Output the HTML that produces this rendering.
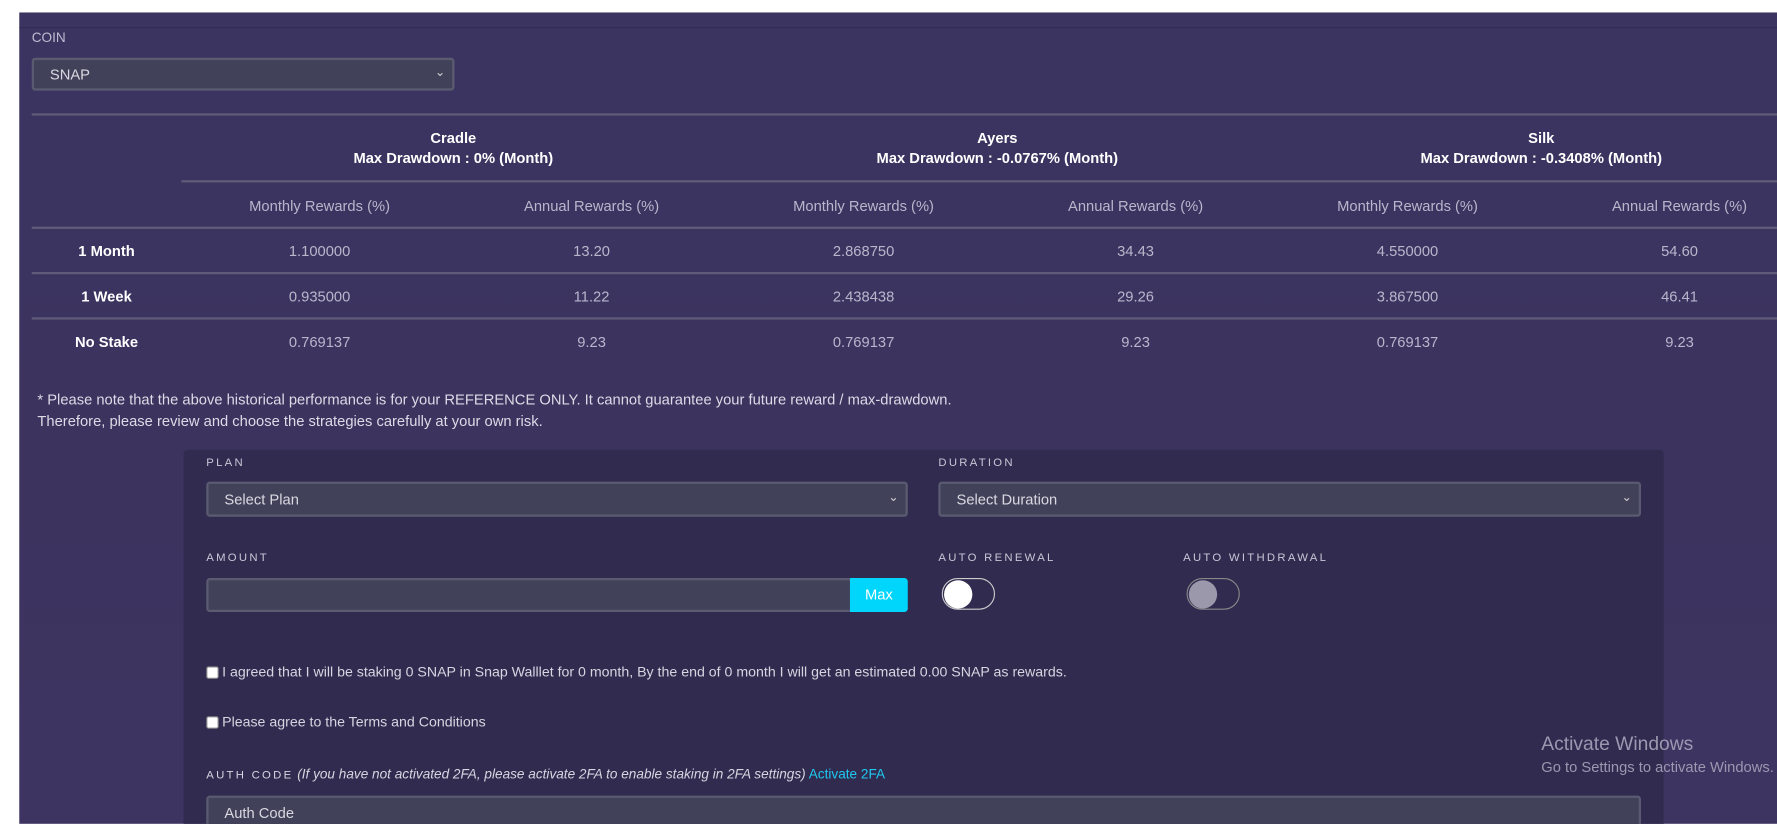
<!DOCTYPE html>
<html><head><meta charset="utf-8"><style>
*{margin:0;padding:0;box-sizing:border-box}
html,body{width:1777px;height:824px;overflow:hidden}
body{background:#fff;font-family:"Liberation Sans",sans-serif;position:relative}
#clip{position:absolute;left:0;top:0;width:1777px;height:824px;overflow:hidden}
#w{position:absolute;left:0;top:0;width:1568px;height:727px;transform:scale(1.13329);transform-origin:0 0;overflow:hidden}
.bg{position:absolute;left:17px;top:11px;right:0;bottom:0;background:linear-gradient(#3c3460,#3c335f 60%,#3e3462)}
.a{position:absolute;white-space:nowrap}
.line{position:absolute;height:2px;background:#5f5b78}
.c{position:absolute;text-align:center;width:240px;font-size:13px;color:#b9b6cc}
.h{position:absolute;text-align:center;font-size:13px;font-weight:bold;color:#fff}
.sel{position:absolute;background:#41425a;border:2px solid #5a5b70;border-radius:3px;color:#d8d8e0;font-size:13px;padding-left:14px}
.sel .chev{position:absolute;right:6px;top:50%;transform:translateY(-55%);font-size:11px;color:#ccc}
.lbl{position:absolute;font-size:10px;letter-spacing:2px;color:#c8c6d6}
.tog{position:absolute;width:47px;height:28px;border:1px solid #ccc;border-radius:14px}
.tog i{position:absolute;left:1px;top:1px;width:25px;height:25px;border-radius:50%}
.cb{position:absolute;width:11px;height:11px;background:#fff;border:1px solid #888;border-radius:2px}
.t{font-size:12.5px;color:#d6d5e0}
</style></head><body><div id="clip"><div id="w">
<div class="bg"></div>
<div class="line" style="left:17px;top:24px;right:0;height:1px;background:#332c55"></div>
<div class="a" style="left:28px;top:26px;font-size:12px;color:#bdbbd0">COIN</div>
<div class="sel" style="left:28px;top:51px;width:373px;height:29px;line-height:25px">SNAP<span class="chev">&#8964;</span></div>

<div class="line" style="left:28px;top:100px;right:0"></div>
<div class="h" style="left:160px;width:480px;top:114px">Cradle<br><span style="line-height:22px">Max Drawdown : 0% (Month)</span></div>
<div class="h" style="left:640px;width:480px;top:114px">Ayers<br><span style="line-height:22px">Max Drawdown : -0.0767% (Month)</span></div>
<div class="h" style="left:1120px;width:480px;top:114px">Silk<br><span style="line-height:22px">Max Drawdown : -0.3408% (Month)</span></div>
<div class="line" style="left:160px;top:159px;right:0"></div>
<div class="c" style="left:162px;top:174px">Monthly Rewards (%)</div>
<div class="c" style="left:402px;top:174px">Annual Rewards (%)</div>
<div class="c" style="left:642px;top:174px">Monthly Rewards (%)</div>
<div class="c" style="left:882px;top:174px">Annual Rewards (%)</div>
<div class="c" style="left:1122px;top:174px">Monthly Rewards (%)</div>
<div class="c" style="left:1362px;top:174px">Annual Rewards (%)</div>
<div class="line" style="left:28px;top:200px;right:0"></div>
<div class="h" style="left:28px;width:132px;top:214px">1 Month</div>
<div class="c" style="left:162px;top:214px">1.100000</div><div class="c" style="left:402px;top:214px">13.20</div><div class="c" style="left:642px;top:214px">2.868750</div><div class="c" style="left:882px;top:214px">34.43</div><div class="c" style="left:1122px;top:214px">4.550000</div><div class="c" style="left:1362px;top:214px">54.60</div>
<div class="line" style="left:28px;top:240px;right:0"></div>
<div class="h" style="left:28px;width:132px;top:254px">1 Week</div>
<div class="c" style="left:162px;top:254px">0.935000</div><div class="c" style="left:402px;top:254px">11.22</div><div class="c" style="left:642px;top:254px">2.438438</div><div class="c" style="left:882px;top:254px">29.26</div><div class="c" style="left:1122px;top:254px">3.867500</div><div class="c" style="left:1362px;top:254px">46.41</div>
<div class="line" style="left:28px;top:280px;right:0"></div>
<div class="h" style="left:28px;width:132px;top:294px">No Stake</div>
<div class="c" style="left:162px;top:294px">0.769137</div><div class="c" style="left:402px;top:294px">9.23</div><div class="c" style="left:642px;top:294px">0.769137</div><div class="c" style="left:882px;top:294px">9.23</div><div class="c" style="left:1122px;top:294px">0.769137</div><div class="c" style="left:1362px;top:294px">9.23</div>

<div class="a" style="left:33px;top:343px;font-size:13px;color:#dcdbe6;line-height:19px">* Please note that the above historical performance is for your REFERENCE ONLY. It cannot guarantee your future reward / max-drawdown.<br>Therefore, please review and choose the strategies carefully at your own risk.</div>

<div class="a" style="left:162px;top:397px;width:1306px;height:340px;background:#322b50;border-radius:3px"></div>
<div class="lbl" style="left:182px;top:403px">PLAN</div>
<div class="sel" style="left:182px;top:425px;width:619px;height:31px;line-height:27px">Select Plan<span class="chev">&#8964;</span></div>
<div class="lbl" style="left:828px;top:403px">DURATION</div>
<div class="sel" style="left:828px;top:425px;width:620px;height:31px;line-height:27px">Select Duration<span class="chev">&#8964;</span></div>
<div class="lbl" style="left:182px;top:487px">AMOUNT</div>
<div class="sel" style="left:182px;top:510px;width:570px;height:30px"></div>
<div class="a" style="left:750px;top:510px;width:51px;height:30px;background:#00d5fb;color:#fff;font-size:13px;text-align:center;line-height:30px;border-radius:0 3px 3px 0">Max</div>
<div class="lbl" style="left:828px;top:487px">AUTO RENEWAL</div>
<div class="tog" style="left:831px;top:510px"><i style="background:#fff"></i></div>
<div class="lbl" style="left:1044px;top:487px">AUTO WITHDRAWAL</div>
<div class="tog" style="left:1047px;top:510px;border-color:#888"><i style="background:#9a98aa"></i></div>
<div class="cb" style="left:182px;top:588px"></div>
<div class="a t" style="left:196px;top:586px">I agreed that I will be staking 0 SNAP in Snap Walllet for 0 month, By the end of 0 month I will get an estimated 0.00 SNAP as rewards.</div>
<div class="cb" style="left:182px;top:632px"></div>
<div class="a t" style="left:196px;top:630px">Please agree to the Terms and Conditions</div>
<div class="a" style="left:182px;top:676px;font-size:12px;color:#d6d5e0"><span style="font-size:10px;letter-spacing:2px">AUTH CODE</span> <i>(If you have not activated 2FA, please activate 2FA to enable staking in 2FA settings)</i> <span style="color:#1ec8f0">Activate 2FA</span></div>
<div class="sel" style="left:182px;top:702px;width:1266px;height:40px;padding-top:6px">Auth Code</div>
<div class="a" style="left:1360px;top:647px;font-size:17px;color:#9b98b0">Activate Windows</div>
<div class="a" style="left:1360px;top:669px;font-size:13px;color:#9b98b0">Go to Settings to activate Windows.</div>
</div></div></body></html>
